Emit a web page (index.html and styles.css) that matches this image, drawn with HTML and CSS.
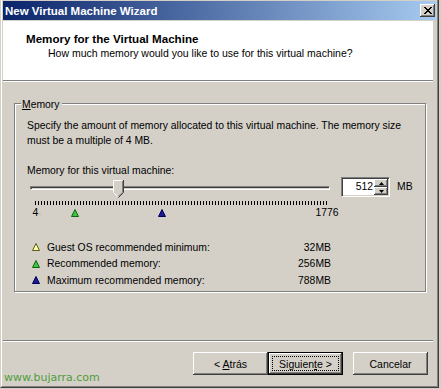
FILE: index.html
```html
<!DOCTYPE html>
<html>
<head>
<meta charset="utf-8">
<link rel="stylesheet" href="styles.css">
</head>
<body>
<div class="window">
  <div class="frame">
    <div class="titlebar">
      <span class="title">New Virtual Machine Wizard</span>
      <span class="close">
        <svg width="8" height="7" viewBox="0 0 8 7"><path d="M0.5 0 L7.5 7 M1.5 0 L8.5 7 M7.5 0 L0.5 7 M8.5 0 L1.5 7" stroke="#000" stroke-width="1" fill="none" transform="translate(-0.5 0)"/></svg>
      </span>
    </div>
    <div class="header">
      <div class="h-title">Memory for the Virtual Machine</div>
      <div class="h-sub">How much memory would you like to use for this virtual machine?</div>
    </div>
    <div class="sep"></div>
    <div class="main">
      <div class="group">
        <div class="legend"><u>M</u>emory</div>
        <p class="desc">Specify the amount of memory allocated to this virtual machine. The memory size<br>must be a multiple of 4 MB.</p>
        <div class="lbl">Memory for this virtual machine:</div>
        <div class="slider-row">
          <div class="slider">
            <div class="track"></div>
            <div class="thumb" style="left:83px">
              <svg width="11" height="18" viewBox="0 0 11 18">
                <path d="M0 0 H10 V12 L5 17 L0 12 Z" fill="#d4d0c8"/>
                <path d="M0.5 12 V0.5 H9.5" stroke="#fff" fill="none"/>
                <path d="M10.5 0 V12.5 L5.5 17.5" stroke="#404040" fill="none"/>
                <path d="M9.5 1 V12.2 L5.2 16.5" stroke="#808080" fill="none"/>
                <path d="M0.5 12.5 L4.5 16.5" stroke="#fff" fill="none"/>
              </svg>
            </div>
          </div>
          <div class="spin">
            <span class="val">512</span>
            <span class="spinbtns">
              <span class="sbtn"><svg width="5" height="3" viewBox="0 0 5 3"><path d="M2.5 0 L5 3 H0 Z" fill="#000"/></svg></span>
              <span class="sbtn"><svg width="5" height="3" viewBox="0 0 5 3"><path d="M0 0 H5 L2.5 3 Z" fill="#000"/></svg></span>
            </span>
          </div>
          <span class="unit">MB</span>
        </div>
        <div class="ticks"></div>
        <div class="scale">
          <span class="mark num" style="left:5.5px">4</span>
          <span class="mark dot" style="left:10px"></span>
          <span class="mark tri" style="left:44.5px"><svg width="8" height="8" viewBox="0 0 8 8"><path d="M4 0.5 L7.5 7.5 H0.5 Z" fill="#3ec43e" stroke="#0c6a0c"/></svg></span>
          <span class="mark tri" style="left:131.5px"><svg width="8" height="8" viewBox="0 0 8 8"><path d="M4 0.5 L7.5 7.5 H0.5 Z" fill="#1a1a8c" stroke="#000060"/></svg></span>
          <span class="mark num" style="left:297px">1776</span>
        </div>
        <ul class="keys">
          <li class="key">
            <svg width="8" height="8" viewBox="0 0 8 8"><path d="M4 0.5 L7.5 7.5 H0.5 Z" fill="#ffff9c" stroke="#5a5a20"/></svg>
            <span class="kname">Guest OS recommended minimum:</span>
            <span class="kval">32MB</span>
          </li>
          <li class="key">
            <svg width="8" height="8" viewBox="0 0 8 8"><path d="M4 0.5 L7.5 7.5 H0.5 Z" fill="#3ec43e" stroke="#0c6a0c"/></svg>
            <span class="kname">Recommended memory:</span>
            <span class="kval">256MB</span>
          </li>
          <li class="key">
            <svg width="8" height="8" viewBox="0 0 8 8"><path d="M4 0.5 L7.5 7.5 H0.5 Z" fill="#1a1a8c" stroke="#000060"/></svg>
            <span class="kname">Maximum recommended memory:</span>
            <span class="kval">788MB</span>
          </li>
        </ul>
      </div>
    </div>
    <div class="sep"></div>
    <div class="footer">
      <button class="btn">&lt; <u>A</u>trás</button>
      <button class="btn default"><span class="focus">Siguien<u>t</u>e &gt;</span></button>
      <button class="btn cancel">Cancelar</button>
    </div>
    <div class="watermark">www.bujarra.com</div>
  </div>
</div>
</body>
</html>
```
FILE: styles.css
```css
* { box-sizing: border-box; }
html, body { margin: 0; padding: 0; }
body {
  width: 441px;
  height: 389px;
  background: #d4d0c8;
  font-family: "Liberation Sans", Arial, sans-serif;
  font-size: 10.4px;
  color: #000;
  overflow: hidden;
}
.window {
  width: 439px;
  height: 388px;
  border-left: 1px solid #d4d0c8;
  border-right: 1px solid #404040;
  border-bottom: 1px solid #404040;
}
.frame {
  position: relative;
  height: 100%;
  border-left: 1px solid #fff;
  border-right: 1px solid #808080;
  border-bottom: 1px solid #808080;
  padding: 1px 1px 1px 1px;
  display: flex;
  flex-direction: column;
}
.titlebar {
  height: 19px;
  margin-bottom: 1px;
  background: linear-gradient(to right, #0a246a, #a6caf0);
  display: flex;
  align-items: center;
  padding: 1px 1px 0 2px;
}
.title {
  flex: 1;
  color: #fff;
  font-weight: bold;
  font-size: 11.5px;
  line-height: 14px;
}
.close {
  width: 15px;
  height: 13px;
  margin-top: -1px;
  background: #d4d0c8;
  box-shadow: inset -1px -1px #404040, inset 1px 1px #fff, inset -2px -2px #808080;
  display: flex;
  align-items: center;
  justify-content: center;
  padding-bottom: 1px;
}
.close svg { display: block; }
.header {
  height: 59px;
  margin-right: 3px;
  background: #fff;
  padding: 11px 0 0 23px;
}
.h-title {
  font-weight: bold;
  font-size: 11.6px;
  line-height: 14px;
}
.h-sub {
  line-height: 14px;
  padding-left: 22px;
  font-size: 10.5px;
}
.sep {
  height: 2px;
  margin-right: 3px;
  border-top: 1px solid #808080;
  border-bottom: 1px solid #fff;
}
.main {
  height: 258px;
  padding: 21px 0 0 11px;
}
.group {
  width: 412px;
  height: 189px;
  border: 1px solid #808080;
  box-shadow: inset 1px 1px #fff, 1px 1px #fff;
  padding: 0 0 0 12px;
}
.legend {
  display: inline-block;
  margin: -6px 0 0 -6px;
  padding: 0 2px 0 1px;
  background: #d4d0c8;
  line-height: 13px;
  vertical-align: top;
}
.desc {
  margin: 3px 0 0 0;
  line-height: 15px;
}
.lbl {
  margin-top: 17px;
  line-height: 12px;
}
.slider-row {
  display: flex;
  align-items: flex-start;
  height: 20px;
}
.slider {
  position: relative;
  width: 300px;
  height: 20px;
  margin-left: 3px;
}
.track {
  margin-top: 9px;
  height: 4px;
  border-top: 1px solid #808080;
  border-left: 1px solid #808080;
  border-bottom: 1px solid #fff;
  border-right: 1px solid #fff;
  box-shadow: inset 1px 1px #404040;
}
.thumb {
  position: absolute;
  top: 3px;
  width: 11px;
  height: 18px;
}
.thumb svg { display: block; }
.spin {
  margin-left: 11px;
  width: 49px;
  height: 20px;
  background: #fff;
  border-top: 1px solid #808080;
  border-left: 1px solid #808080;
  border-bottom: 1px solid #fff;
  border-right: 1px solid #fff;
  box-shadow: inset 1px 1px #404040, inset -1px -1px #d4d0c8;
  display: flex;
  padding: 1px 1px 1px 1px;
}
.val {
  flex: 1;
  text-align: right;
  line-height: 16px;
  padding-right: 1px;
}
.spinbtns {
  width: 14px;
  display: flex;
  flex-direction: column;
}
.sbtn {
  flex: 1;
  background: #d4d0c8;
  box-shadow: inset -1px -1px #404040, inset 1px 1px #fff, inset -2px -2px #808080;
  display: flex;
  align-items: center;
  justify-content: center;
}
.sbtn svg { display: block; }
.unit {
  margin-left: 7px;
  line-height: 20px;
}
.ticks {
  margin: 4px 0 0 8px;
  width: 292px;
  height: 4px;
  background: repeating-linear-gradient(to right, #000 0 1px, transparent 1px 3px);
}
.scale {
  position: relative;
  margin: 2px 0 0 3px;
  width: 300px;
  height: 12px;
}
.mark {
  position: absolute;
  top: 0;
  transform: translateX(-50%);
  line-height: 12px;
}
.mark.dot {
  top: 6px;
  width: 2px;
  height: 2px;
  background: #c8c8a0;
}
.mark.tri { top: 2px; height: 8px; }
.mark.tri svg { display: block; }
.keys {
  list-style: none;
  margin: 20px 0 0 0;
  padding: 0;
}
.key {
  width: 304px;
  display: flex;
  align-items: center;
  height: 16.5px;
  padding-left: 5px;
}
.key svg { display: block; flex: none; }
.kname { margin-left: 7px; }
.kval { margin-left: auto; }
.footer {
  display: flex;
  justify-content: flex-end;
  padding: 10px 8px 0 0;
}
.btn {
  position: relative;
  width: 75px;
  height: 23px;
  margin: 0;
  border: none;
  padding: 0;
  background: #d4d0c8;
  font-family: "Liberation Sans", Arial, sans-serif;
  font-size: 10.5px;
  color: #000;
  box-shadow: inset -1px -1px #404040, inset 1px 1px #fff, inset -2px -2px #808080;
}
.btn.default {
  border: 1px solid #000;
  box-shadow: inset -1px -1px #404040, inset 1px 1px #fff, inset -2px -2px #808080;
}
.focus {
  position: absolute;
  left: 3px;
  right: 3px;
  top: 3px;
  bottom: 3px;
  border: 1px dotted #000;
  display: flex;
  align-items: center;
  justify-content: center;
}
.btn.cancel { margin-left: 10px; }
.watermark {
  position: absolute;
  left: 2px;
  top: 371px;
  font-family: "DejaVu Sans", sans-serif;
  font-size: 11px;
  line-height: 13px;
  color: #4f9d3a;
}
```
